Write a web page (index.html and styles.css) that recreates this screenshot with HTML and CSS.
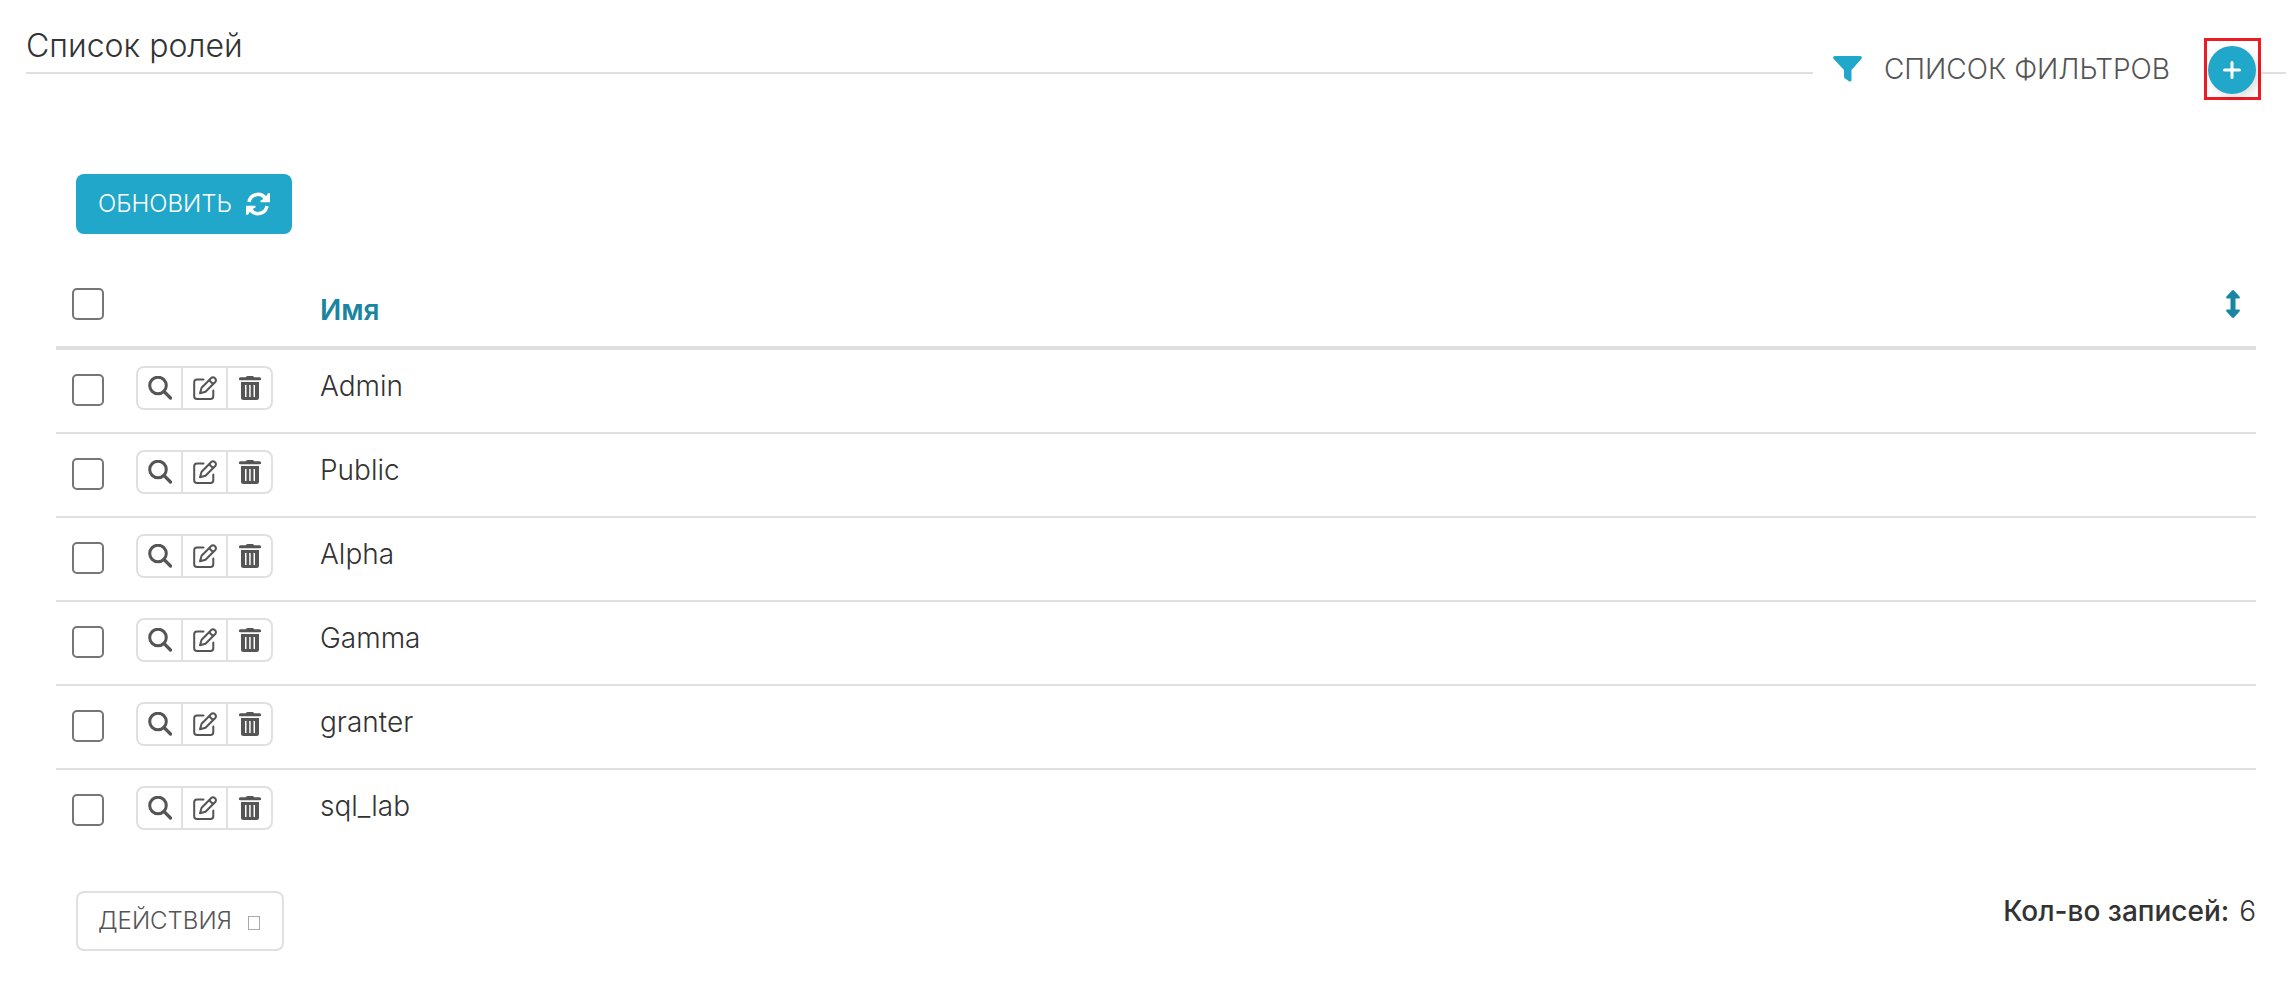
FILE: index.html
```html
<!DOCTYPE html>
<html lang="ru">
<head>
  <meta charset="UTF-8">
  <title>Список ролей</title>
  <link rel="stylesheet" href="styles.css">
</head>
<body>
  <svg class="sprite" aria-hidden="true">
    <symbol id="icon-search" viewBox="0 0 24 24">
      <circle cx="10" cy="9.5" r="8.3" fill="none" stroke="currentColor" stroke-width="3"/>
      <path d="M16 15.500l6.500 6.500" fill="none" stroke="currentColor" stroke-width="3.200" stroke-linecap="round"/>
    </symbol>
    <symbol id="icon-edit" viewBox="0 0 24 24" fill="none" stroke="currentColor" stroke-width="2" stroke-linejoin="round" stroke-linecap="round">
      <path d="M10.500 3.500H4Q1.200 3.500 1.200 6.300V20.200Q1.200 23 4 23H17.500Q20.300 23 20.300 20.200V14.500"/>
      <path d="M7 17.300L8.600 11.700 18 2.200Q20 .300 22 2.200 24 4.200 22 6.200L12.500 15.700ZM16.200 4.200L20 8"/>
    </symbol>
    <symbol id="icon-trash" viewBox="0 0 22 24">
      <path fill="currentColor" fill-rule="evenodd" d="M7 1.300Q7.400 0 8.500 0h5Q14.600 0 15 1.300h5.600a1.400 1.400 0 0 1 0 3H1.400a1.400 1.400 0 0 1 0-3ZM2 6h18v15.500Q20 24 17.500 24h-13Q2 24 2 21.500ZM6 9v12h1.500V9ZM10.200 9v12h1.500V9ZM14.500 9v12H16V9Z"/>
    </symbol>
  </svg>

  <header class="page-header">
    <h1 class="page-title">Список ролей</h1>
    <div class="header-tools">
      <button class="filter-toggle" type="button">
        <svg class="filter-icon" viewBox="0 0 29 26"><path d="M2 0H27Q30 .5 28.300 3L18.500 14V24Q18.300 26.300 16 25.300L12 22.500Q11 21.800 11 20.500V14L.7 3Q-1 .5 2 0Z"/></svg>
        Список фильтров
      </button>
      <div class="add-frame">
        <button class="add-button" type="button" aria-label="Добавить">
          <svg viewBox="0 0 18 18"><path d="M9 1.500V16.500M1.500 9H16.500"/></svg>
        </button>
      </div>
    </div>
    <div class="header-tail"></div>
  </header>

  <main class="content">
    <button class="btn btn-primary" type="button">
      Обновить
      <svg class="refresh-icon" viewBox="0 0 24 24">
        <path class="arc" d="M3 10A9.200 9.200 0 0 1 19 5.500M21 14A9.200 9.200 0 0 1 5 18.500"/>
        <path class="head" d="M24 1.200V10.200H14.500V8.500L17.500 7 16 5.500 20 4.500 22 1.200ZM0 22.800V13.800H9.500V15.500L6.500 17 8 18.500 4 19.500 2 22.800Z"/>
      </svg>
    </button>

    <table class="roles">
      <thead>
        <tr>
          <th class="col-check"><input type="checkbox" aria-label="Выбрать все"></th>
          <th class="col-actions"></th>
          <th>
            <a class="sort-link" href="#">
              Имя
              <svg class="sort-icon" viewBox="0 0 14 28"><path d="M6 .5Q7-.3 8 .5L13.500 6.500Q14.500 8.500 13 8.500H9.500V19.500H13Q14.500 19.500 13.500 21.500L8 27.500Q7 28.300 6 27.500L.5 21.500Q-.5 19.500 1 19.500H4.500V8.500H1Q-.5 8.500.5 6.500Z"/></svg>
            </a>
          </th>
        </tr>
      </thead>
      <tbody>
        <tr>
          <td><input type="checkbox" aria-label="Admin"></td>
          <td>
            <div class="btn-group">
              <button type="button" aria-label="Просмотр"><svg><use href="#icon-search"/></svg></button>
              <button type="button" aria-label="Изменить"><svg><use href="#icon-edit"/></svg></button>
              <button type="button" aria-label="Удалить"><svg><use href="#icon-trash"/></svg></button>
            </div>
          </td>
          <td>Admin</td>
        </tr>
        <tr>
          <td><input type="checkbox" aria-label="Public"></td>
          <td>
            <div class="btn-group">
              <button type="button" aria-label="Просмотр"><svg><use href="#icon-search"/></svg></button>
              <button type="button" aria-label="Изменить"><svg><use href="#icon-edit"/></svg></button>
              <button type="button" aria-label="Удалить"><svg><use href="#icon-trash"/></svg></button>
            </div>
          </td>
          <td>Public</td>
        </tr>
        <tr>
          <td><input type="checkbox" aria-label="Alpha"></td>
          <td>
            <div class="btn-group">
              <button type="button" aria-label="Просмотр"><svg><use href="#icon-search"/></svg></button>
              <button type="button" aria-label="Изменить"><svg><use href="#icon-edit"/></svg></button>
              <button type="button" aria-label="Удалить"><svg><use href="#icon-trash"/></svg></button>
            </div>
          </td>
          <td>Alpha</td>
        </tr>
        <tr>
          <td><input type="checkbox" aria-label="Gamma"></td>
          <td>
            <div class="btn-group">
              <button type="button" aria-label="Просмотр"><svg><use href="#icon-search"/></svg></button>
              <button type="button" aria-label="Изменить"><svg><use href="#icon-edit"/></svg></button>
              <button type="button" aria-label="Удалить"><svg><use href="#icon-trash"/></svg></button>
            </div>
          </td>
          <td>Gamma</td>
        </tr>
        <tr>
          <td><input type="checkbox" aria-label="granter"></td>
          <td>
            <div class="btn-group">
              <button type="button" aria-label="Просмотр"><svg><use href="#icon-search"/></svg></button>
              <button type="button" aria-label="Изменить"><svg><use href="#icon-edit"/></svg></button>
              <button type="button" aria-label="Удалить"><svg><use href="#icon-trash"/></svg></button>
            </div>
          </td>
          <td>granter</td>
        </tr>
        <tr>
          <td><input type="checkbox" aria-label="sql_lab"></td>
          <td>
            <div class="btn-group">
              <button type="button" aria-label="Просмотр"><svg><use href="#icon-search"/></svg></button>
              <button type="button" aria-label="Изменить"><svg><use href="#icon-edit"/></svg></button>
              <button type="button" aria-label="Удалить"><svg><use href="#icon-trash"/></svg></button>
            </div>
          </td>
          <td>sql_lab</td>
        </tr>
      </tbody>
    </table>

    <footer class="list-footer">
      <button class="btn btn-default" type="button">
        Действия
        <span class="caret"></span>
      </button>
      <div class="count"><strong>Кол-во записей:</strong> 6</div>
    </footer>
  </main>
</body>
</html>
```
FILE: styles.css
```css
* {
  box-sizing: border-box;
}
body {
  margin: 0;
  background-color: #fff;
  color: #333;
  font-family: Inter, "Liberation Sans", sans-serif;
  font-size: 28px;
  font-weight: 350;
  line-height: 40px;
}
button {
  font: inherit;
  color: #555;
  background: none;
  border: none;
  padding: 0;
  cursor: pointer;
}
.sprite {
  display: none;
}

/* header */
.page-header {
  display: flex;
  align-items: flex-start;
  padding: 0 9px 0 26px;
}
.page-title {
  flex: 1;
  margin: 0;
  height: 74px;
  padding-top: 24px;
  border-bottom: 2px solid #e0e0e0;
  font-size: 32px;
  font-weight: 350;
  line-height: 44px;
}
.header-tools {
  display: flex;
  align-items: center;
  gap: 34px;
  padding: 38px 0 0 20px;
}
.filter-toggle {
  display: flex;
  align-items: center;
  gap: 22px;
  font-weight: 300;
  text-transform: uppercase;
}
.filter-icon {
  width: 29px;
  height: 26px;
  fill: #20a7c9;
}
.add-frame {
  border: 3px solid #ed1c24;
  padding: 5px 2px 3px 1px;
}
.add-button {
  display: flex;
  align-items: center;
  justify-content: center;
  width: 48px;
  height: 48px;
  border-radius: 50%;
  background-color: #20a7c9;
  box-shadow: 4px 4px 8px rgba(0,0,0,0.12);
}
.add-button svg {
  width: 18px;
  height: 18px;
  fill: none;
  stroke: #fff;
  stroke-width: 3;
  stroke-linecap: round;
}
.header-tail {
  width: 25px;
  height: 74px;
  border-bottom: 2px solid #e0e0e0;
}

.content {
  padding: 74px 39px 36px 56px;
}

/* buttons */
.btn {
  display: flex;
  align-items: center;
  height: 60px;
  margin-left: 20px;
  padding: 0 22px;
  border-radius: 8px;
  font-size: 24px;
  text-transform: uppercase;
}
.btn-primary {
  gap: 14px;
  background-color: #20a7c9;
  color: #fff;
}
.btn-default {
  gap: 16px;
  padding: 0 20px;
  border: 2px solid #e0e0e0;
  font-weight: 300;
}
.refresh-icon {
  width: 24px;
  height: 24px;
}
.refresh-icon .arc {
  fill: none;
  stroke: #fff;
  stroke-width: 3.5;
}
.refresh-icon .head {
  fill: #fff;
}
.caret {
  width: 12px;
  height: 14px;
  margin: 3px 2px 0 0;
  border: 1px solid #aaa;
}

/* table */
.roles {
  width: 100%;
  margin-top: 40px;
  border-collapse: separate;
  border-spacing: 0;
  table-layout: fixed;
}
.roles th,
.roles td {
  height: 84px;
  padding: 16px 16px 0;
  text-align: left;
  vertical-align: top;
}
.roles th {
  height: 76px;
  border-bottom: 4px solid #e0e0e0;
}
.roles td {
  border-bottom: 2px solid #e0e0e0;
}
.roles tr:last-child td {
  border-bottom: none;
}
.roles .col-check {
  width: 64px;
}
.roles .col-actions {
  width: 184px;
}
.roles input {
  display: block;
  appearance: none;
  width: 32px;
  height: 32px;
  margin: 8px 0 0;
  border: 2px solid #767676;
  border-radius: 5px;
  background-color: #fff;
}
.roles th input {
  margin-top: -2px;
}
.sort-link {
  display: flex;
  justify-content: space-between;
  color: #1985a0;
  font-weight: 600;
  text-decoration: none;
}
.sort-icon {
  width: 14px;
  height: 28px;
  fill: #1985a0;
}
.btn-group {
  display: flex;
  width: 137px;
  height: 44px;
  border: 2px solid #e0e0e0;
  border-radius: 8px;
}
.btn-group button {
  display: flex;
  flex: 1;
  align-items: center;
  justify-content: center;
}
.btn-group button + button {
  border-left: 2px solid #e0e0e0;
}
.btn-group svg {
  width: 24px;
  height: 24px;
}

/* footer */
.list-footer {
  display: flex;
  align-items: flex-start;
  justify-content: space-between;
  margin-top: 37px;
}
.count strong {
  margin-right: 2px;
  font-weight: 550;
}
```
